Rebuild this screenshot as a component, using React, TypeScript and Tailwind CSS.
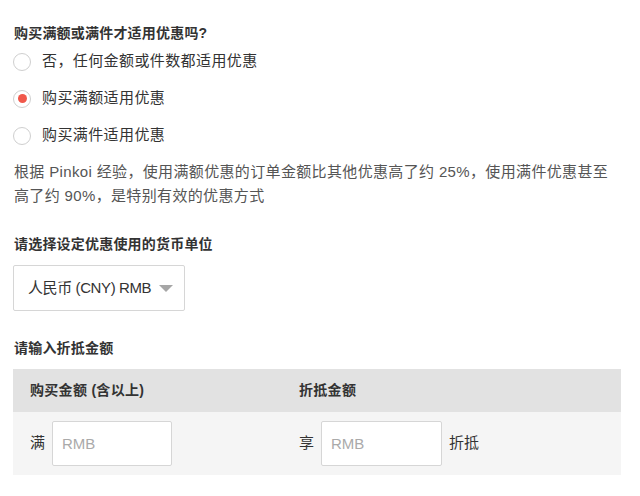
import { useState } from 'react';

const font = "font-['Liberation_Sans','Noto_Sans_CJK_SC',sans-serif]";

const options = [
  { id: 'none', label: '否，任何金额或件数都适用优惠' },
  { id: 'amount', label: '购买满额适用优惠' },
  { id: 'count', label: '购买满件适用优惠' },
];

function Radio({ checked }: { checked: boolean }) {
  return (
    <span className="flex h-[18px] w-[18px] shrink-0 items-center justify-center rounded-full border border-[#cfcfcf] bg-white">
      {checked && <span className="h-[9px] w-[9px] rounded-full bg-[#f0584b]" />}
    </span>
  );
}

export default function App() {
  const [selected, setSelected] = useState('amount');

  return (
    <div className={`${font} min-h-[496px] bg-white px-[13px] pt-[23px] text-[#333]`}>
      <h3 className="pl-px text-[14px] font-bold leading-[20px] tracking-[0.2px] text-[#333]">
        购买满额或满件才适用优惠吗?
      </h3>
      <div>
        {options.map((o) => (
          <label
            key={o.id}
            className="flex h-[37px] cursor-pointer items-center gap-[11px]"
            onClick={() => setSelected(o.id)}
          >
            <Radio checked={selected === o.id} />
            <span className="text-[15px] tracking-[0.4px] text-[#333]">{o.label}</span>
          </label>
        ))}
      </div>
      <p className="mt-[6px] w-[610px] pl-px text-[15px] leading-[24px] tracking-[0.35px] text-[#555]">
        根据 Pinkoi 经验，使用满额优惠的订单金额比其他优惠高了约 25%，使用满件优惠甚至高了约 90%，是特别有效的优惠方式
      </p>

      <h3 className="mt-[26px] pl-px text-[14px] font-bold leading-[20px] tracking-[0.2px]">
        请选择设定优惠使用的货币单位
      </h3>
      <div className="mt-[11px] flex h-[46px] w-[172px] items-center rounded-[2px] border border-[#d6d6d6] bg-white pl-[14px] pr-[11px]">
        <span className="text-[15px] tracking-[-0.4px] text-[#333]">人民币 (CNY) RMB</span>
        <svg className="ml-auto" width="14" height="7" viewBox="0 0 14 7">
          <path d="M0 0 L14 0 L7 7 Z" fill="#a6a6a6" />
        </svg>
      </div>

      <h3 className="mt-[27px] pl-px text-[14px] font-bold leading-[20px] tracking-[0.2px]">
        请输入折抵金额
      </h3>
      <div className="mt-[11px] w-[608px]">
        <div className="grid h-[43px] grid-cols-[269px_1fr] items-center bg-[#e2e2e2] text-[14px] font-bold tracking-[0.3px]">
          <span className="pl-[17px]">购买金额 (含以上)</span>
          <span className="pl-[17px]">折抵金额</span>
        </div>
        <div className="grid h-[63px] grid-cols-[269px_1fr] items-center bg-[#f5f5f5] text-[15px]">
          <div className="flex items-center gap-[7px] pl-[17px]">
            <span>满</span>
            <input
              placeholder="RMB"
              className="h-[45px] w-[120px] rounded-[2px] border border-[#d6d6d6] bg-white px-[9px] text-[15px] outline-none placeholder:text-[#aaa]"
            />
          </div>
          <div className="flex items-center gap-[7px] pl-[17px]">
            <span>享</span>
            <input
              placeholder="RMB"
              className="h-[45px] w-[121px] rounded-[2px] border border-[#d6d6d6] bg-white px-[9px] text-[15px] outline-none placeholder:text-[#aaa]"
            />
            <span>折抵</span>
          </div>
        </div>
      </div>
    </div>
  );
}
